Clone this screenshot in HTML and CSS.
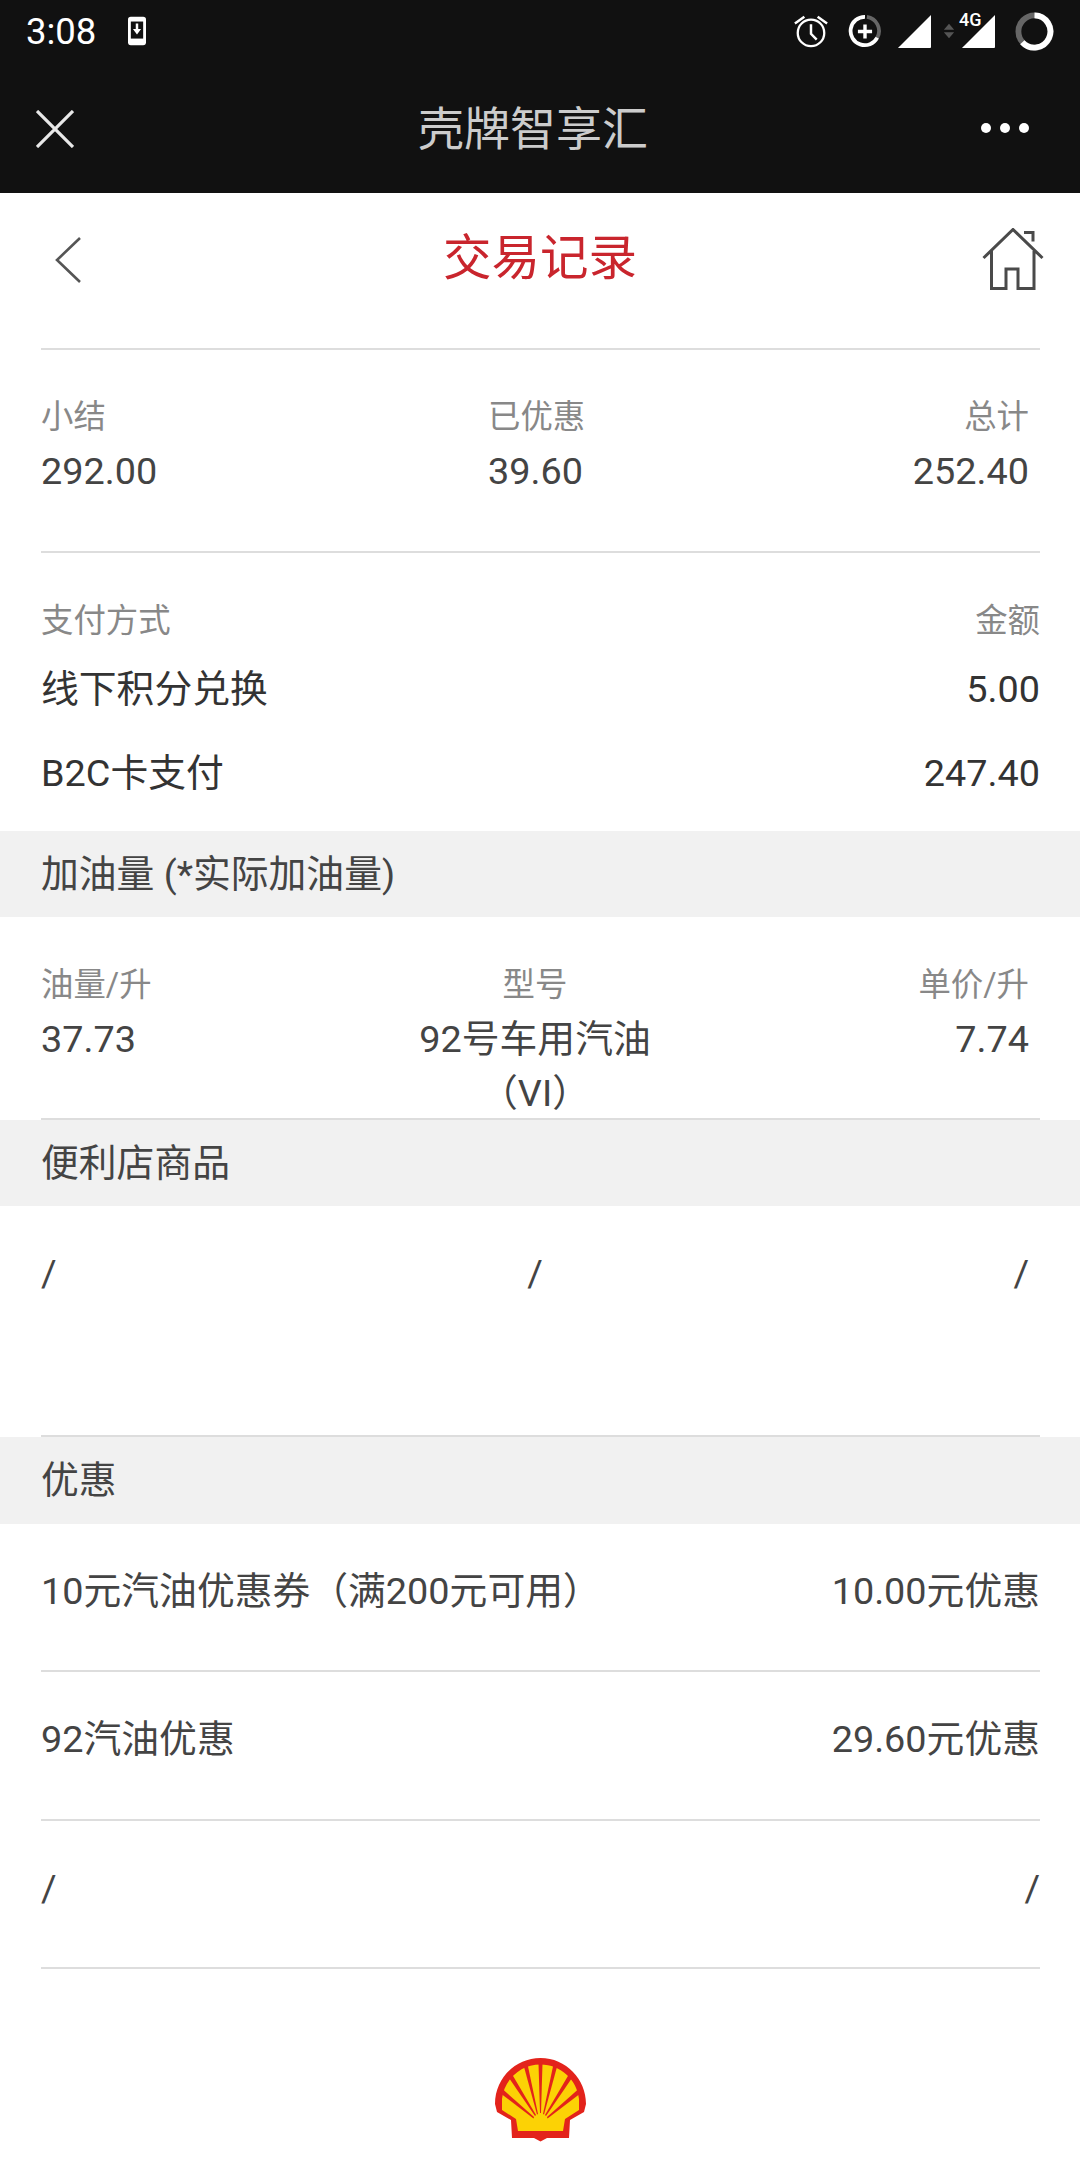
FILE: index.html
```html
<!DOCTYPE html>
<html lang="zh-CN">
<head>
    <meta charset="UTF-8">
    <meta name="viewport" content="width=device-width, initial-scale=1.0">
    <title>交易记录</title>
    <link rel="stylesheet" href="styles.css">
</head>
<body>
    <div class="top-bar">
        <div class="status-bar">
            <div class="status-left">
                <span class="time">3:08</span>
                <svg class="dl-icon" width="18" height="30" viewBox="0 0 19 30"><rect x="0" y="0" width="19" height="30" rx="3" fill="#fff"/><rect x="3" y="5" width="13" height="18" fill="#111"/><path d="M8.200 7h2.600v6h3L9.500 18.600 5.200 13h3z" fill="#fff"/></svg>
            </div>
            <div class="status-right">
                <svg width="36" height="36" viewBox="0 0 38 36" fill="none" stroke="#fff" stroke-width="2.400"><circle cx="19" cy="20" r="14"/><path d="M19 11v10l6 6M2 10l10-7M36 10 26 3" stroke-width="2.600"/></svg>
                <svg class="gap-a" width="34" height="34" viewBox="0 0 36 36" fill="none"><path d="M20 3a15 15 0 0 1 11 22" stroke="#666" stroke-width="4"/><path d="M31 25A15 15 0 1 1 18 3" stroke="#fff" stroke-width="4"/><path d="M18 11v15M10.500 18.500h15" stroke="#fff" stroke-width="3.600"/></svg>
                <svg class="gap-b" width="35" height="35" viewBox="0 0 36 36"><path d="M35 1v33a1 1 0 0 1-1 1H1z" fill="#fff"/></svg>
                <svg class="gap-c" width="12" height="17" viewBox="0 0 14 18"><path d="M7 0l6 7H1zM1 10h12l-6 7z" fill="#555"/></svg>
                <div class="sig4g">
                    <svg width="35" height="35" viewBox="0 0 36 36"><path d="M35 1v33a1 1 0 0 1-1 1H1z" fill="#fff"/></svg>
                    <span class="net-label">4G</span>
                </div>
                <svg class="gap-d" width="39" height="39" viewBox="0 0 40 40" fill="none" stroke-width="6"><circle cx="20" cy="20" r="16.500" stroke="#666"/><path d="M20 3.500A16.500 16.500 0 1 1 7.500 31" stroke="#fff"/></svg>
            </div>
        </div>
        <div class="wx-nav">
            <svg class="wx-close" width="38" height="38" viewBox="0 0 38 38"><path d="M1 1l36 36M37 1 1 37" stroke="#e8e8e8" stroke-width="3.200"/></svg>
            <span class="wx-title">壳牌智享汇</span>
            <div class="wx-more"><i></i><i></i><i></i></div>
        </div>
    </div>

    <div class="page-head">
        <svg class="back" width="28" height="48" viewBox="0 0 28 48" fill="none"><path d="M26 2 3 24l23 22" stroke="#555" stroke-width="2.600"/></svg>
        <h1>交易记录</h1>
        <svg class="home" width="62" height="64" viewBox="0 0 62 64" fill="none" stroke="#4a4a4a" stroke-width="3"><path d="M1.500 30 31 1.500 60.500 30M9.500 23v37.500H24V41h12v19.500H52V23M42 4.500h9v9"/></svg>
    </div>

    <div class="content">
        <div class="summary">
            <div class="cols cols-summary">
                <div class="col"><span class="lbl">小结</span><span class="val">292.00</span></div>
                <div class="col"><span class="lbl">已优惠</span><span class="val">39.60</span></div>
                <div class="col col-right"><span class="lbl">总计</span><span class="val">252.40</span></div>
            </div>
        </div>
        <div class="payments">
            <div class="row lbl-row"><span class="lbl">支付方式</span><span class="lbl">金额</span></div>
            <div class="row pay-row"><span class="val dark">线下积分兑换</span><span class="val dark">5.00</span></div>
            <div class="row pay-row"><span class="val dark">B2C卡支付</span><span class="val dark">247.40</span></div>
        </div>
    </div>

    <div class="band">加油量 (*实际加油量)</div>
    <div class="content">
        <div class="fuel">
            <div class="cols">
                <div class="col"><span class="lbl">油量/升</span><span class="val">37.73</span></div>
                <div class="col col-mid"><span class="lbl">型号</span><span class="val">92号车用汽油<br>（VI）</span></div>
                <div class="col col-right"><span class="lbl">单价/升</span><span class="val">7.74</span></div>
            </div>
        </div>
    </div>

    <div class="band">便利店商品</div>
    <div class="content">
        <div class="shop">
            <div class="cols">
                <div class="col"><span class="val">/</span></div>
                <div class="col col-mid"><span class="val">/</span></div>
                <div class="col col-right"><span class="val">/</span></div>
            </div>
        </div>
    </div>

    <div class="band band-tall">优惠</div>
    <div class="content">
        <div class="row promo"><span class="val">10元汽油优惠券（满200元可用）</span><span class="val">10.00元优惠</span></div>
        <div class="row promo promo-mid"><span class="val">92汽油优惠</span><span class="val">29.60元优惠</span></div>
        <div class="row promo"><span class="val">/</span><span class="val">/</span></div>
    </div>

    <div class="logo">
        <svg width="91" height="85" viewBox="0 0 91 85">
            <path d="M45.500 1C20 1 0 22 0 47l2 8 14 8 1 18h22l6.500 3.500L52 81h22l1-18 14-8 2-8C91 22 71 1 45.500 1z" fill="#e3231b"/>
            <path d="M45.500 7.500C25 7.500 9 23 7 42l0 11 14 9 2 12h45l2-12 14-9 0-11C82 23 66 7.500 45.500 7.500z" fill="#fcd205"/>
            <g fill="#e3231b">
                <path d="M43.500 6h4L46 56h-1z"/>
                <path d="M28.500 8l4-1L43 57l-1 .5z"/>
                <path d="M58.500 7l4 1L49 57.500 48 57z"/>
                <path d="M14 21l3.500-3L41 58l-1 1z"/>
                <path d="M73.500 18l3.500 3L51 59l-1-1z"/>
                <path d="M5 36l2.500-4L39 60l-.5 1.500z"/>
                <path d="M83.500 32l2.500 4L52.500 61.500 52 60z"/>
            </g>
        </svg>
    </div>
</body>
</html>
```

FILE: styles.css
```css
html, body {
    margin: 0;
    padding: 0;
}

body {
    width: 1080px;
    height: 2160px;
    overflow: hidden;
    background: #fff;
    font-family: Roboto, "Noto Sans CJK SC", sans-serif;
    color: #333;
}

.top-bar {
    background: #111;
    height: 193px;
}

.status-bar {
    height: 62px;
    display: flex;
    justify-content: space-between;
    align-items: center;
    padding: 0 26px;
}

.status-left {
    display: flex;
    align-items: center;
}

.time {
    font-size: 36.500px;
    color: #fff;
}

.dl-icon {
    margin-left: 32px;
}

.status-right {
    display: flex;
    align-items: center;
}

.gap-a { margin-left: 19px; }
.gap-b { margin-left: 15px; }
.gap-c { margin-left: 11px; }
.gap-d { margin-left: 19px; }

.sig4g {
    position: relative;
    width: 35px;
    height: 35px;
    margin-left: 6px;
}

.net-label {
    position: absolute;
    left: -2px;
    top: -3px;
    font-size: 18px;
    line-height: 18px;
    font-weight: 500;
    color: #fff;
}

.wx-nav {
    height: 131px;
    display: flex;
    align-items: center;
    justify-content: center;
    position: relative;
}

.wx-close {
    position: absolute;
    left: 36px;
    top: 48px;
}

.wx-title {
    font-size: 46px;
    color: #ccc;
    margin: -6px 14px 0 0;
}

.wx-more {
    position: absolute;
    right: 51px;
    top: 61px;
    display: flex;
    gap: 9px;
}

.wx-more i {
    width: 10px;
    height: 10px;
    border-radius: 50%;
    background: #fff;
}

.page-head {
    height: 155px;
    position: relative;
    display: flex;
    justify-content: center;
}

.page-head h1 {
    margin: 38px 0 0;
    font-size: 48.500px;
    line-height: 56px;
    font-weight: 400;
    color: #c9252d;
}

.back {
    position: absolute;
    left: 54px;
    top: 43px;
}

.home {
    position: absolute;
    left: 982px;
    top: 35px;
}

.content {
    padding: 0 40px 0 41px;
}

.summary {
    border-top: 2px solid #ddd;
    border-bottom: 2px solid #ddd;
    height: 205px;
    padding-top: 40px;
    box-sizing: border-box;
}

.cols {
    display: grid;
    grid-template-columns: 1fr auto 1fr;
    padding-right: 11px;
}

.cols-summary {
    grid-template-columns: 447px 1fr auto;
}

.col {
    display: flex;
    flex-direction: column;
}

.col-mid {
    align-items: center;
    text-align: center;
}

.col-right {
    align-items: flex-end;
}

.lbl {
    font-size: 32.400px;
    line-height: 54px;
    color: #888;
}

.val {
    font-size: 37.800px;
    line-height: 54px;
    color: #444;
}

.dark {
    color: #333;
}

.row {
    display: flex;
    justify-content: space-between;
}

.payments {
    height: 278px;
    padding-top: 41px;
    box-sizing: border-box;
}

.lbl-row {
    height: 53px;
    align-items: center;
}

.pay-row {
    height: 84px;
    align-items: center;
}

.band {
    height: 86px;
    background: #f1f1f1;
    padding: 0 41px;
    font-size: 37.800px;
    line-height: 86px;
    color: #444;
}

.band-tall {
    height: 87px;
}

.fuel {
    height: 203px;
    padding-top: 41px;
    border-bottom: 2px solid #ddd;
    box-sizing: border-box;
}

.shop {
    height: 231px;
    padding-top: 40px;
    border-bottom: 2px solid #ddd;
    box-sizing: border-box;
}

.promo {
    height: 148px;
    padding-top: 40px;
    border-bottom: 2px solid #ddd;
    box-sizing: border-box;
}

.promo-mid {
    height: 149px;
}

.logo {
    display: flex;
    justify-content: center;
    padding-top: 88px;
}
```
